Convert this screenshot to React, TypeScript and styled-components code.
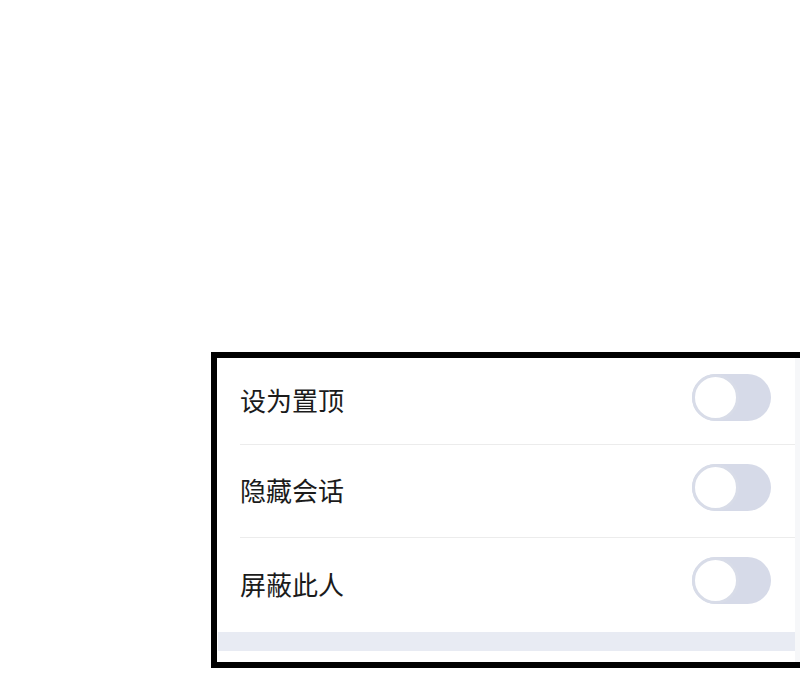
import React from "react";
import styled, { createGlobalStyle } from "styled-components";

const Global = createGlobalStyle`
  html, body { margin: 0; padding: 0; background: #ffffff; overflow: hidden; }
  body { font-family: "Noto Sans CJK SC", "Noto Sans", sans-serif; }
`;

const Page = styled.div`
  width: 800px;
  height: 700px;
  padding: 352px 0 0 211px;
  box-sizing: border-box;
  overflow: hidden;
`;

const Frame = styled.div`
  width: 620px;
  border: 6px solid #000;
  border-right: none;
  background: #f6f7f9;
`;

const Panel = styled.div`
  width: 578px;
  background: #ffffff;
  display: flex;
  flex-direction: column;
`;

const Row = styled.div<{ $h: number; $divider: boolean }>`
  height: ${(p) => p.$h}px;
  margin-left: 23px;
  padding-right: 24px;
  display: flex;
  align-items: center;
  justify-content: space-between;
  border-bottom: ${(p) => (p.$divider ? "1px solid #ececec" : "none")};
  box-sizing: border-box;
`;

const Label = styled.span`
  font-size: 26px;
  color: #1b1b1b;
  line-height: 1;
  margin-bottom: 2px;
`;

const Track = styled.div`
  width: 79px;
  height: 47px;
  border-radius: 24px;
  background: #d6dae8;
  position: relative;
  flex-shrink: 0;
  margin-bottom: 8px;
`;

const Knob = styled.div`
  position: absolute;
  left: 0;
  top: 0;
  width: 47px;
  height: 47px;
  border-radius: 50%;
  background: #ffffff;
  border: 3px solid #d8dce8;
  box-sizing: border-box;
`;

const Footer = styled.div`
  height: 19px;
  background: #e8ebf3;
  margin-left: 1px;
  margin-top: 1px;
`;

const Bottom = styled.div`
  height: 11px;
  background: #ffffff;
`;

const items = [
  { label: "设为置顶", h: 87 },
  { label: "隐藏会话", h: 93 },
  { label: "屏蔽此人", h: 93 },
];

export default function App() {
  return (
    <>
      <Global />
      <Page>
        <Frame>
          <Panel>
            {items.map((it, i) => (
              <Row key={it.label} $h={it.h} $divider={i < items.length - 1}>
                <Label>{it.label}</Label>
                <Track>
                  <Knob />
                </Track>
              </Row>
            ))}
            <Footer />
            <Bottom />
          </Panel>
        </Frame>
      </Page>
    </>
  );
}
